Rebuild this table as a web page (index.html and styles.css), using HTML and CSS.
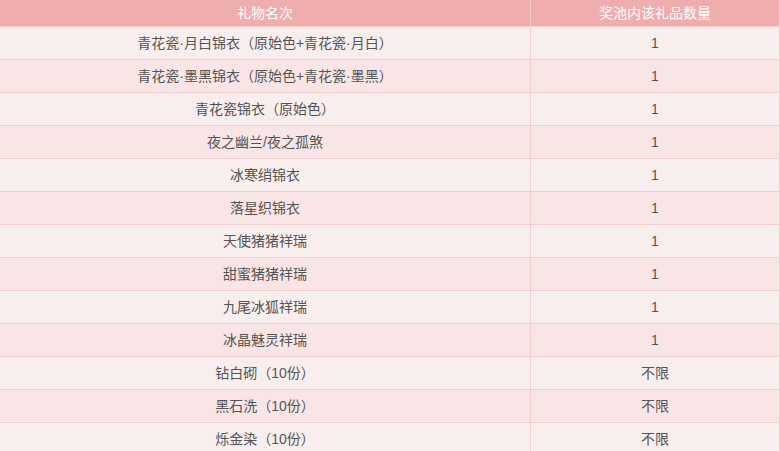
FILE: index.html
```html
<!DOCTYPE html>
<html lang="zh">
<head>
<meta charset="utf-8">
<link rel="stylesheet" href="styles.css">
</head>
<body>
<table class="gifts">
<thead>
<tr><th class="c1">礼物名次</th><th class="c2">奖池内该礼品数量</th></tr>
</thead>
<tbody>
<tr><td>青花瓷·月白锦衣（原始色+青花瓷·月白）</td><td>1</td></tr>
<tr><td>青花瓷·墨黑锦衣（原始色+青花瓷·墨黑）</td><td>1</td></tr>
<tr><td>青花瓷锦衣（原始色）</td><td>1</td></tr>
<tr><td>夜之幽兰/夜之孤煞</td><td>1</td></tr>
<tr><td>冰寒绡锦衣</td><td>1</td></tr>
<tr><td>落星织锦衣</td><td>1</td></tr>
<tr><td>天使猪猪祥瑞</td><td>1</td></tr>
<tr><td>甜蜜猪猪祥瑞</td><td>1</td></tr>
<tr><td>九尾冰狐祥瑞</td><td>1</td></tr>
<tr><td>冰晶魅灵祥瑞</td><td>1</td></tr>
<tr><td>钻白砌（10份）</td><td>不限</td></tr>
<tr><td>黑石洗（10份）</td><td>不限</td></tr>
<tr><td>烁金染（10份）</td><td>不限</td></tr>
</tbody>
</table>
</body>
</html>
```
FILE: styles.css
```css
html, body {
  margin: 0;
  padding: 0;
  background: #f8eeee;
}
.gifts {
  width: 780px;
  border-collapse: collapse;
  font-family: "Liberation Sans", "Noto Sans CJK SC", sans-serif;
  font-size: 14px;
  color: #555;
  table-layout: fixed;
}
.gifts .c1 { width: 530px; }
.gifts th {
  height: 26px;
  background: #f0adad;
  color: #fff;
  font-weight: normal;
  border: 1px solid #f6cccc;
  border-top: none;
  padding: 0;
  line-height: 26px;
}
.gifts td {
  height: 32px;
  padding: 0;
  text-align: center;
  border: 1px solid #f1cdcd;
  line-height: 32px;
}
.gifts tbody tr:nth-child(odd) td { background: #f8eeee; }
.gifts tbody tr:nth-child(even) td { background: #f9e5e5; }
.gifts th:first-child, .gifts td:first-child { border-left: none; }
```
